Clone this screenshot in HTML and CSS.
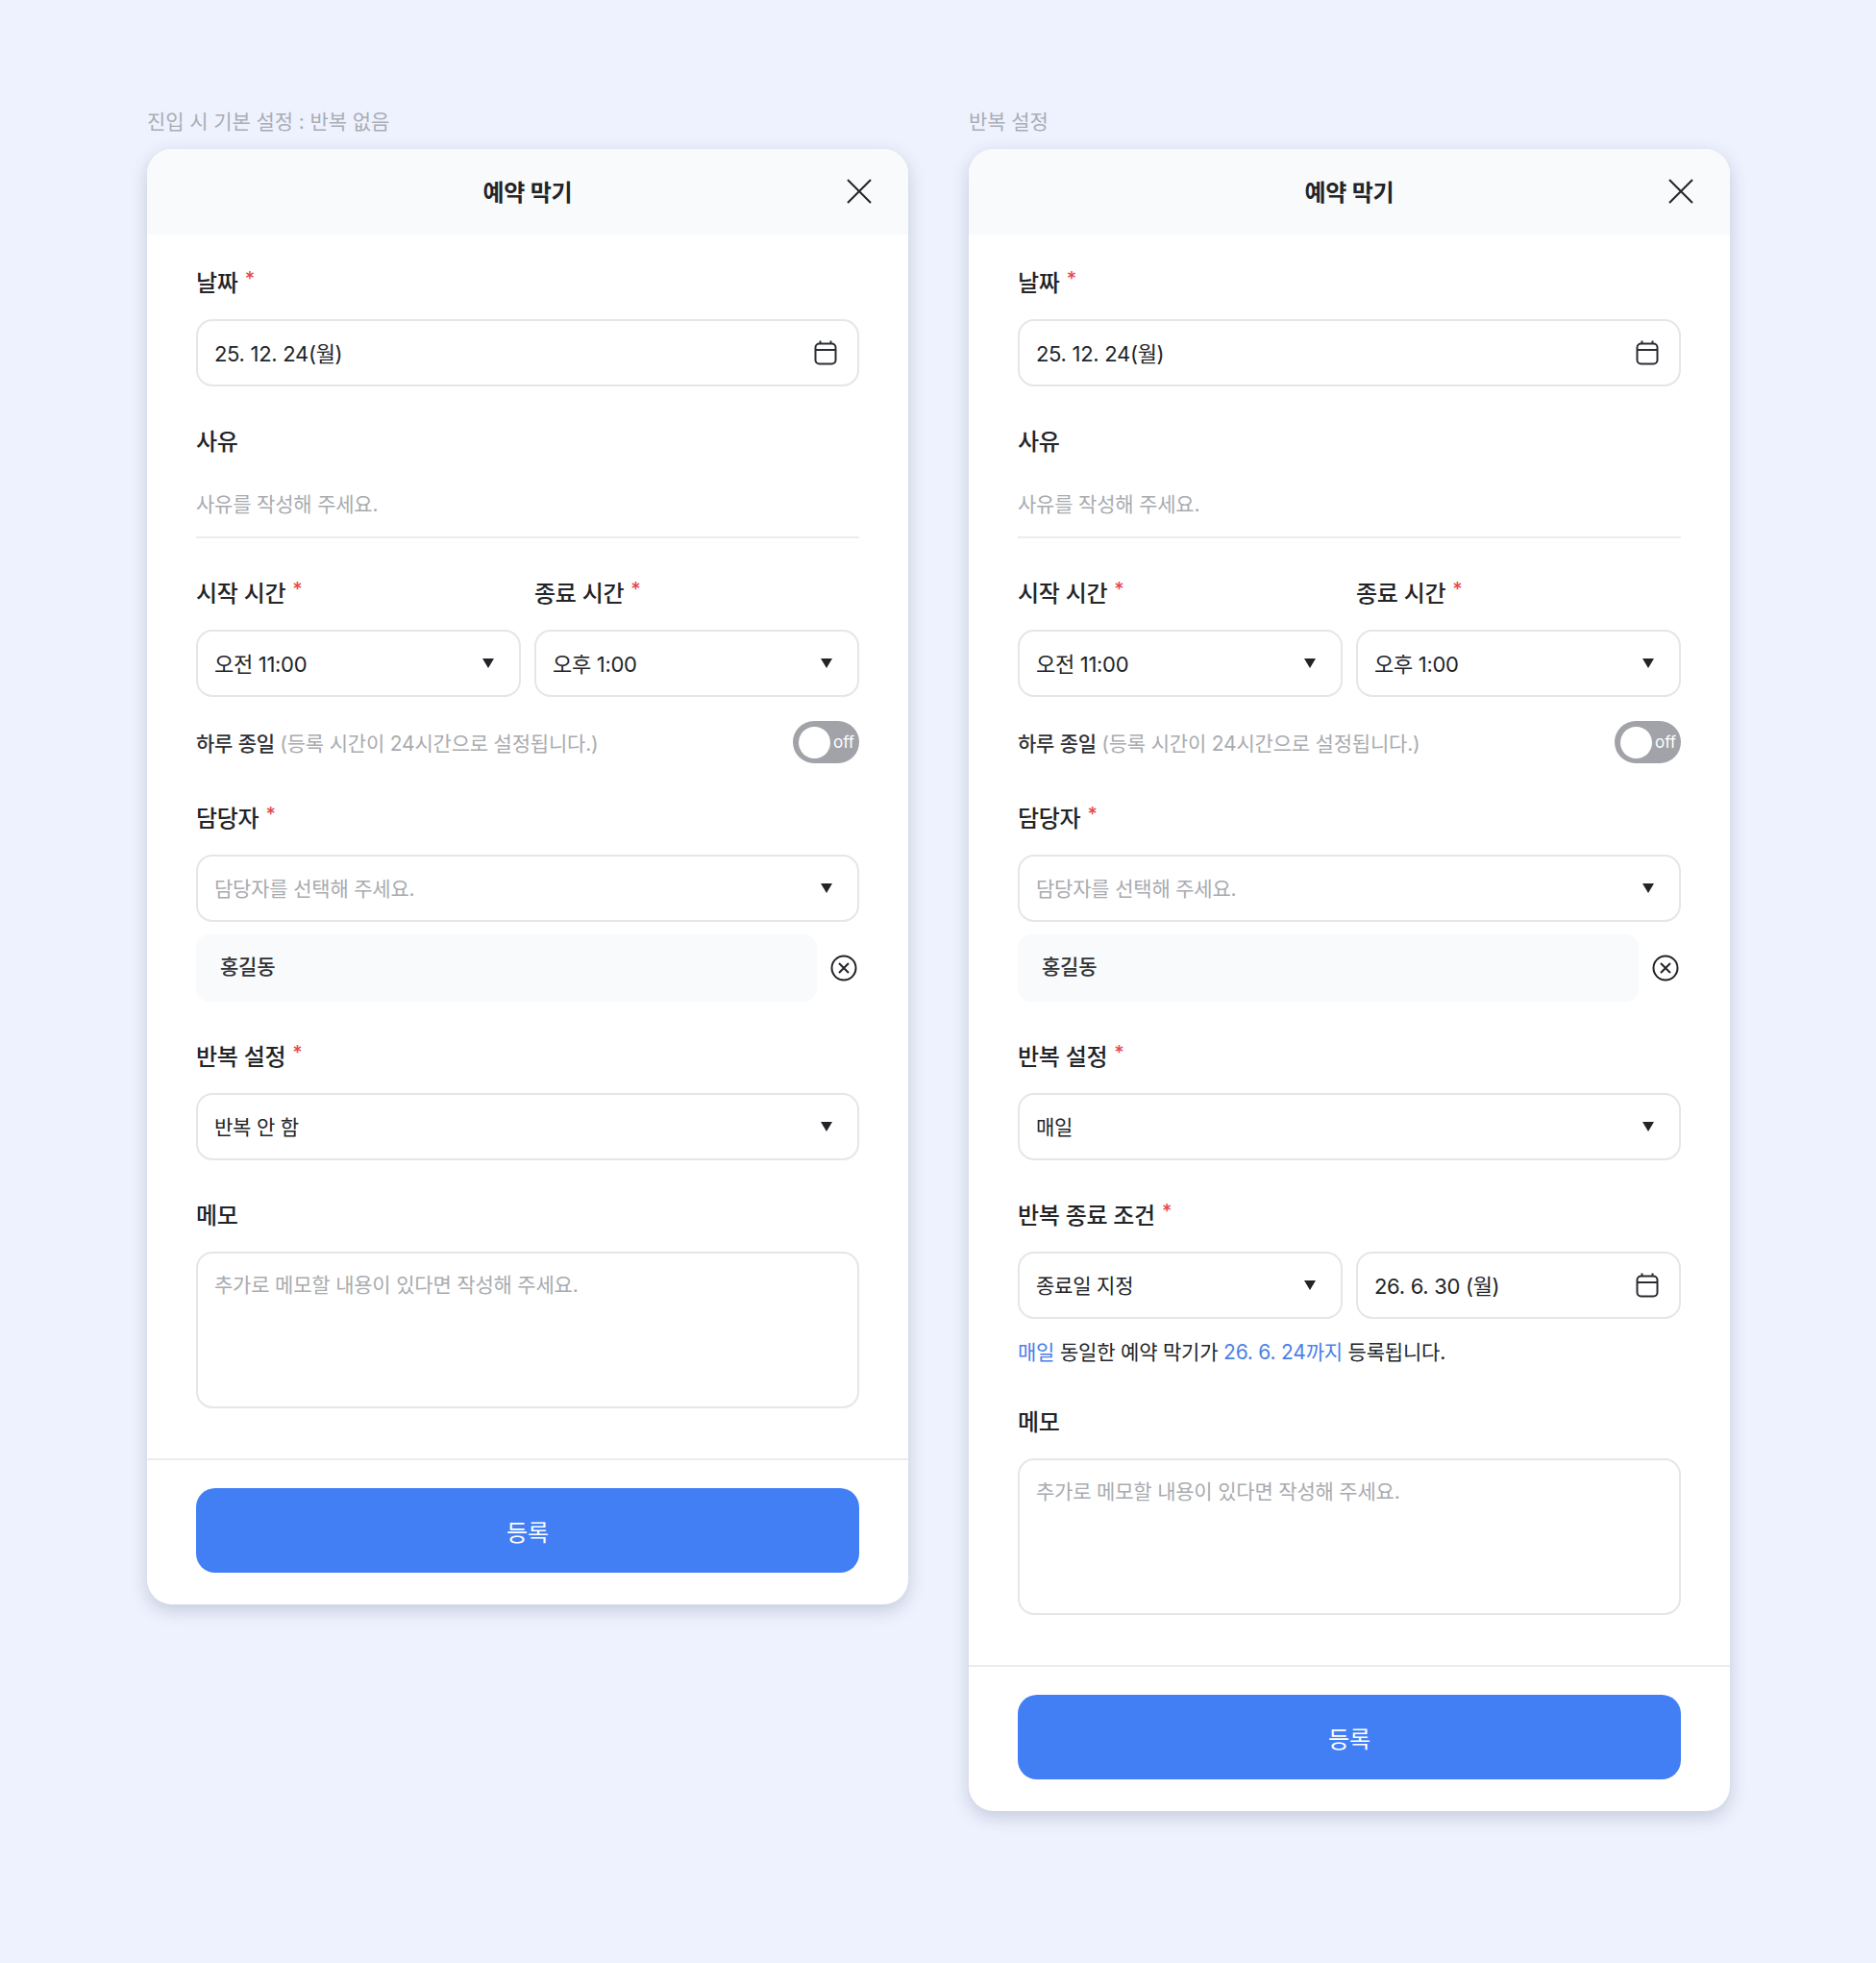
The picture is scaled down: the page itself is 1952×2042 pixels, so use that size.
FILE: index.html
```html
<!DOCTYPE html>
<html lang="ko">
<head>
  <meta charset="UTF-8">
  <title>예약 막기</title>
  <link rel="stylesheet" href="styles.css">
</head>
<body>
  <svg class="defs" width="0" height="0">
    <symbol id="icon-calendar" viewBox="0 0 24 26">
      <rect x="1.5" y="3.5" width="21" height="21" rx="4" fill="none" stroke="currentColor" stroke-width="2"/>
      <path d="M1.5 10h21M6.5 0.5v3M17.5 0.5v3" fill="none" stroke="currentColor" stroke-width="2"/>
    </symbol>
    <symbol id="icon-remove" viewBox="0 0 28 28">
      <circle cx="14" cy="14" r="12.5" fill="none" stroke="currentColor" stroke-width="2"/>
      <path d="M9 9l10 10M19 9L9 19" fill="none" stroke="currentColor" stroke-width="2"/>
    </symbol>
  </svg>

  <main class="boards">
    <section class="board">
      <p class="caption">진입 시 기본 설정 : 반복 없음</p>
      <div class="card">
        <header class="card-head">
          <h2>예약 막기</h2>
          <svg class="close" width="28" height="28" viewBox="0 0 28 28"><path d="M2 2l24 24M26 2L2 26" fill="none" stroke="currentColor" stroke-width="2"/></svg>
        </header>
        <div class="card-body">
          <div class="label">날짜 <em>*</em></div>
          <div class="box"><span class="num">25. 12. 24(월)</span><svg class="ico-cal"><use href="#icon-calendar"/></svg></div>

          <div class="label gap">사유</div>
          <div class="line-input">사유를 작성해 주세요.</div>

          <div class="two gap">
            <div>
              <div class="label">시작 시간 <em>*</em></div>
              <div class="box"><span class="num">오전 11:00</span><i class="arrow"></i></div>
            </div>
            <div>
              <div class="label">종료 시간 <em>*</em></div>
              <div class="box"><span class="num">오후 1:00</span><i class="arrow"></i></div>
            </div>
          </div>

          <div class="allday">
            <div class="allday-text">하루 종일 <span>(등록 시간이 24시간으로 설정됩니다.)</span></div>
            <div class="toggle"><b></b><span>off</span></div>
          </div>

          <div class="label gap">담당자 <em>*</em></div>
          <div class="box"><span class="ph">담당자를 선택해 주세요.</span><i class="arrow"></i></div>
          <div class="person">
            <div class="chip">홍길동</div>
            <svg class="ico-remove"><use href="#icon-remove"/></svg>
          </div>

          <div class="label gap">반복 설정 <em>*</em></div>
          <div class="box"><span>반복 안 함</span><i class="arrow"></i></div>

          <div class="label gap">메모</div>
          <div class="memo">추가로 메모할 내용이 있다면 작성해 주세요.</div>
        </div>
        <footer class="card-foot"><button class="submit">등록</button></footer>
      </div>
    </section>

    <section class="board">
      <p class="caption">반복 설정</p>
      <div class="card">
        <header class="card-head">
          <h2>예약 막기</h2>
          <svg class="close" width="28" height="28" viewBox="0 0 28 28"><path d="M2 2l24 24M26 2L2 26" fill="none" stroke="currentColor" stroke-width="2"/></svg>
        </header>
        <div class="card-body">
          <div class="label">날짜 <em>*</em></div>
          <div class="box"><span class="num">25. 12. 24(월)</span><svg class="ico-cal"><use href="#icon-calendar"/></svg></div>

          <div class="label gap">사유</div>
          <div class="line-input">사유를 작성해 주세요.</div>

          <div class="two gap">
            <div>
              <div class="label">시작 시간 <em>*</em></div>
              <div class="box"><span class="num">오전 11:00</span><i class="arrow"></i></div>
            </div>
            <div>
              <div class="label">종료 시간 <em>*</em></div>
              <div class="box"><span class="num">오후 1:00</span><i class="arrow"></i></div>
            </div>
          </div>

          <div class="allday">
            <div class="allday-text">하루 종일 <span>(등록 시간이 24시간으로 설정됩니다.)</span></div>
            <div class="toggle"><b></b><span>off</span></div>
          </div>

          <div class="label gap">담당자 <em>*</em></div>
          <div class="box"><span class="ph">담당자를 선택해 주세요.</span><i class="arrow"></i></div>
          <div class="person">
            <div class="chip">홍길동</div>
            <svg class="ico-remove"><use href="#icon-remove"/></svg>
          </div>

          <div class="label gap">반복 설정 <em>*</em></div>
          <div class="box"><span>매일</span><i class="arrow"></i></div>

          <div class="label gap">반복 종료 조건 <em>*</em></div>
          <div class="two">
            <div class="box"><span>종료일 지정</span><i class="arrow"></i></div>
            <div class="box"><span class="num">26. 6. 30 (월)</span><svg class="ico-cal"><use href="#icon-calendar"/></svg></div>
          </div>
          <p class="note"><span>매일</span> 동일한 예약 막기가 <span>26. 6. 24까지</span> 등록됩니다.</p>

          <div class="label gap">메모</div>
          <div class="memo">추가로 메모할 내용이 있다면 작성해 주세요.</div>
        </div>
        <footer class="card-foot"><button class="submit">등록</button></footer>
      </div>
    </section>
  </main>
</body>
</html>
```

FILE: styles.css
```css
* { box-sizing: border-box; margin: 0; padding: 0; }
body {
  font-family: Inter, "Noto Sans CJK KR", sans-serif;
  background-color: #eef2fe;
  color: #222428;
  min-height: 2042px;
}
.defs { position: absolute; }
.boards {
  display: flex;
  align-items: flex-start;
  gap: 63px;
  padding: 112px 0 0 153px;
}
.board { width: 792px; }
.caption {
  font-size: 21px;
  line-height: 30px;
  letter-spacing: -0.1px;
  color: #a9adb5;
  margin-bottom: 13px;
}
.card {
  background-color: #fff;
  border-radius: 26px;
  overflow: hidden;
  box-shadow: 0 6px 18px rgba(50, 60, 100, 0.22);
}
.card-head {
  display: flex;
  justify-content: center;
  align-items: center;
  height: 89px;
  padding-bottom: 2px;
  background-color: #f9fafb;
  position: relative;
}
.card-head h2 {
  font-size: 24px;
  font-weight: 700;
  letter-spacing: -0.2px;
  color: #222428;
}
.close {
  position: absolute;
  right: 37px;
  top: 30px;
  color: #222428;
}
.card-body { padding: 36px 51px 52px; }
.label {
  height: 30px;
  font-size: 24px;
  line-height: 30px;
  font-weight: 500;
  letter-spacing: -0.3px;
  margin-bottom: 22px;
}
.label em {
  font-style: normal;
  font-size: 20px;
  line-height: 0;
  color: #e5484d;
  vertical-align: 6px;
  margin-left: 1px;
}
.gap { margin-top: 43px; }
.box {
  display: flex;
  justify-content: space-between;
  align-items: center;
  height: 70px;
  padding: 0 21px 0 17px;
  border: 2px solid #e5e6e8;
  border-radius: 17px;
  font-size: 21px;
  letter-spacing: -0.2px;
}
.box span { margin-bottom: 3px; }
.num { font-size: 22px; letter-spacing: -0.3px; }
.ph { color: #a9abaf; }
.arrow {
  width: 0;
  height: 0;
  margin-right: 5px;
  border-left: 6px solid transparent;
  border-right: 6px solid transparent;
  border-top: 10px solid #222428;
}
.ico-cal { width: 24px; height: 26px; color: #2a2d33; }
.line-input {
  height: 69px;
  margin-top: -6px;
  padding-top: 19px;
  border-bottom: 2px solid #ececee;
  font-size: 21px;
  line-height: 30px;
  letter-spacing: -0.2px;
  color: #a9abaf;
}
.two {
  display: grid;
  grid-template-columns: 1fr 1fr;
  gap: 14px;
}
.allday {
  display: flex;
  justify-content: space-between;
  align-items: center;
  margin-top: 25px;
}
.allday-text {
  font-size: 21px;
  font-weight: 500;
  letter-spacing: -0.2px;
  color: #2f3135;
}
.allday-text span { font-weight: 400; color: #a9abaf; }
.toggle {
  display: flex;
  align-items: center;
  width: 69px;
  height: 44px;
  padding: 0 6px;
  border-radius: 22px;
  background-color: #a1a3a8;
  color: #fff;
  font-size: 17px;
}
.toggle b {
  width: 33px;
  height: 33px;
  border-radius: 50%;
  background-color: #fff;
  flex-shrink: 0;
  margin-right: 3px;
}
.person {
  display: flex;
  align-items: center;
  margin-top: 13px;
}
.chip {
  flex: 0 0 646px;
  height: 70px;
  line-height: 68px;
  padding-left: 25px;
  border-radius: 14px;
  background-color: #f9fafb;
  font-size: 21px;
  font-weight: 500;
  letter-spacing: -0.2px;
  color: #2f3135;
}
.ico-remove { width: 28px; height: 28px; margin-left: 14px; color: #222428; }
.note {
  margin-top: 20px;
  font-size: 21px;
  line-height: 30px;
  letter-spacing: -0.2px;
}
.note span { color: #4a80e8; }
.memo {
  height: 163px;
  padding: 18px 17px;
  border: 2px solid #e5e6e8;
  border-radius: 17px;
  font-size: 21px;
  line-height: 30px;
  letter-spacing: -0.2px;
  color: #a9abaf;
}
.card-foot {
  padding: 29px 51px 33px;
  border-top: 2px solid #ececee;
}
.submit {
  display: block;
  width: 100%;
  height: 88px;
  border: none;
  border-radius: 20px;
  background-color: #427ff5;
  color: #fff;
  font-family: inherit;
  font-size: 24px;
  font-weight: 400;
}
```
